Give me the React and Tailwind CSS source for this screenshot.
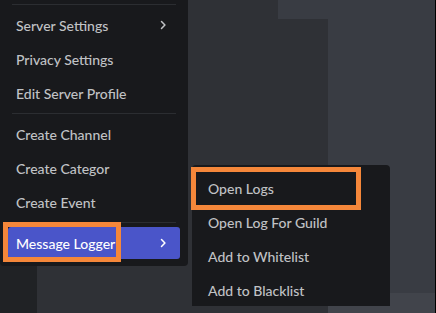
import React from "react";

const Chevron = () => (
  <svg width="18" height="18" viewBox="0 0 24 24" className="shrink-0">
    <path
      fill="currentColor"
      d="M9.29 6.71a1 1 0 000 1.41L13.17 12l-3.88 3.88a1 1 0 101.42 1.41l4.59-4.59a1 1 0 000-1.41L10.71 6.7a1 1 0 00-1.42.01z"
    />
  </svg>
);

const Item = ({ label, arrow, active }) => (
  <div
    className={
      active
        ? "flex h-8 items-center justify-between rounded-[3px] bg-[#4a55c9] px-2 text-white"
        : "flex h-8 items-center justify-between rounded-[3px] px-2 text-[#c0c2c5]"
    }
  >
    <span>{label}</span>
    {arrow && <Chevron />}
  </div>
);

const Sep = () => <div className="mx-1 my-1 h-px bg-[#2b2d31]" />;

export default function App() {
  const font = { fontFamily: "Lato, 'Noto Sans', sans-serif" };

  return (
    <div
      className="relative h-[313px] w-[436px] overflow-hidden border-r border-black bg-[#2f3136] text-[14px] font-medium"
      style={font}
    >
      {/* background panes */}
      <div className="flex h-full flex-col">
        <div className="flex h-[19px]">
          <div className="w-[278px] bg-[#2f3136]" />
          <div className="flex-1 bg-[#393c43]" />
        </div>
        <div className="flex flex-1">
          <div className="w-[37px] bg-[#202225]" />
          <div className="w-[291px] bg-[#2f3136]" />
          <div className="flex flex-1 flex-col">
            <div className="flex-1 bg-[#393c43]" />
            <div className="h-[20px] bg-[#41444b]" />
          </div>
        </div>
      </div>

      {/* main context menu */}
      <div className="absolute left-0 top-0 w-[188px] rounded-b-[4px] bg-[#18191c] px-2 pb-[7px]">
        <Sep />
        <div className="flex flex-col gap-[2px]">
          <Item label="Server Settings" arrow />
          <Item label="Privacy Settings" />
          <Item label="Edit Server Profile" />
        </div>
        <Sep />
        <div className="flex flex-col gap-[2px]">
          <Item label="Create Channel" />
          <Item label="Create Categor" />
          <Item label="Create Event" />
        </div>
        <Sep />
        <Item label="Message Logger" arrow active />
      </div>

      {/* submenu */}
      <div className="absolute left-[192px] top-[165px] w-[198px] rounded-t-[4px] bg-[#18191c] px-2 pt-[7px]">
        <div className="flex flex-col gap-[2px]">
          <Item label="Open Logs" />
          <Item label="Open Log For Guild" />
          <Item label="Add to Whitelist" />
          <Item label="Add to Blacklist" />
        </div>
      </div>

      {/* annotation boxes */}
      <div className="absolute left-[3px] top-[222px] h-[40px] w-[118px] border-[5px] border-[#f5873a]" />
      <div className="absolute left-[191px] top-[167px] h-[43px] w-[170px] border-[5px] border-[#f5873a]" />
    </div>
  );
}
